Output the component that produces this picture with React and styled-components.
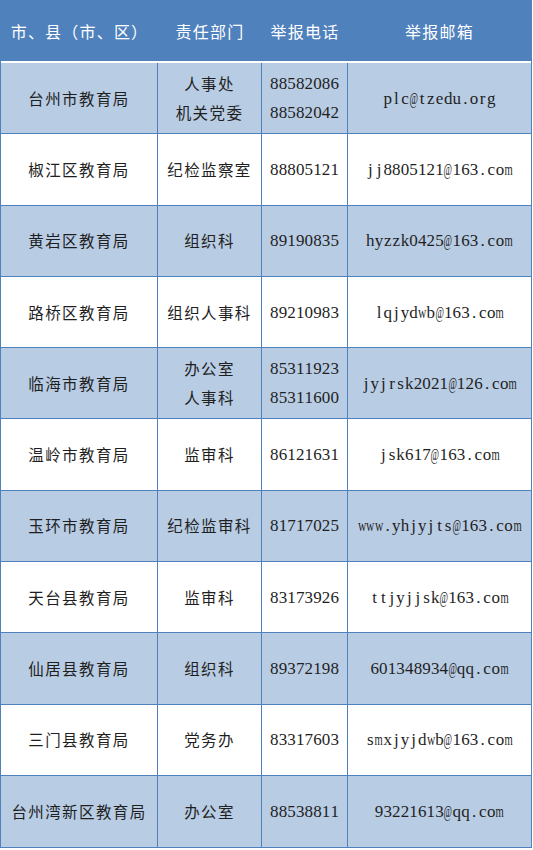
import styled, { createGlobalStyle } from "styled-components";

const rows = [
  { area: "台州市教育局", dept: ["人事处", "机关党委"], phone: ["88582086", "88582042"], mail: "plc@tzedu.org" },
  { area: "椒江区教育局", dept: ["纪检监察室"], phone: ["88805121"], mail: "jj8805121@163.com" },
  { area: "黄岩区教育局", dept: ["组织科"], phone: ["89190835"], mail: "hyzzk0425@163.com" },
  { area: "路桥区教育局", dept: ["组织人事科"], phone: ["89210983"], mail: "lqjydwb@163.com" },
  { area: "临海市教育局", dept: ["办公室", "人事科"], phone: ["85311923", "85311600"], mail: "jyjrsk2021@126.com" },
  { area: "温岭市教育局", dept: ["监审科"], phone: ["86121631"], mail: "jsk617@163.com" },
  { area: "玉环市教育局", dept: ["纪检监审科"], phone: ["81717025"], mail: "www.yhjyjts@163.com" },
  { area: "天台县教育局", dept: ["监审科"], phone: ["83173926"], mail: "ttjyjjsk@163.com" },
  { area: "仙居县教育局", dept: ["组织科"], phone: ["89372198"], mail: "601348934@qq.com" },
  { area: "三门县教育局", dept: ["党务办"], phone: ["83317603"], mail: "smxjyjdwb@163.com" },
  { area: "台州湾新区教育局", dept: ["办公室"], phone: ["88538811"], mail: "93221613@qq.com" },
];

// Times glyphs wider than a half-width cell get squeezed
const squeeze = { "@": 0.54, m: 0.62, w: 0.68, M: 0.58, W: 0.56 };

const GlobalStyle = createGlobalStyle`
  body {
    margin: 0;
    background: #ffffff;
  }
`;

const Table = styled.div`
  width: 532px;
  border-left: 1.5px solid #4f81bd;
  border-right: 1.5px solid #4f81bd;
  border-bottom: 1.5px solid #4f81bd;
  box-sizing: border-box;
`;

const Grid = styled.div`
  display: grid;
  grid-template-columns: 157px 104px 86px 1fr;
`;

const Header = styled(Grid)`
  height: 61px;
  background: #4f81bd;
  border-bottom: 2px solid #ffffff;
`;

const HeadCell = styled.div`
  display: flex;
  align-items: center;
  justify-content: center;
  color: #ffffff;
  font-family: "Noto Sans CJK SC", "Noto Sans", sans-serif;
  font-size: 16px;
  letter-spacing: 1.2px;
  padding-top: 1px;
`;

const Row = styled(Grid)`
  height: 71.3px;
  background: ${(p) => (p.$shaded ? "#b8cce4" : "#ffffff")};
  border-bottom: 1px solid #4f81bd;
  box-sizing: border-box;
  &:last-child {
    border-bottom: none;
  }
`;

const Cell = styled.div`
  display: flex;
  flex-direction: column;
  align-items: center;
  justify-content: center;
  border-right: ${(p) => (p.$last ? "none" : "1.5px solid #4f81bd")};
  color: #1f1f1f;
  line-height: 29px;
`;

const Han = styled.div`
  font-family: "Noto Sans CJK SC", sans-serif;
  font-size: 15.5px;
  letter-spacing: 1.4px;
  font-weight: 400;
`;

const Mono = styled.div`
  display: flex;
  font-family: "Liberation Serif", "Times New Roman", serif;
  font-size: 17px;
`;

const Ch = styled.span`
  display: inline-flex;
  justify-content: center;
  width: 8.65px;
  white-space: pre;
`;

const Glyph = styled.span`
  display: inline-block;
  flex-shrink: 0;
  transform: scaleX(${(p) => p.$scale});
`;

function HalfWidth({ text }) {
  return (
    <Mono>
      {text.split("").map((c, i) => (
        <Ch key={i}>
          {squeeze[c] ? <Glyph $scale={squeeze[c]}>{c}</Glyph> : c}
        </Ch>
      ))}
    </Mono>
  );
}

export default function App() {
  return (
    <>
      <GlobalStyle />
      <Table>
        <Header>
          <HeadCell>市、县（市、区）</HeadCell>
          <HeadCell>责任部门</HeadCell>
          <HeadCell>举报电话</HeadCell>
          <HeadCell>举报邮箱</HeadCell>
        </Header>
        {rows.map((r, i) => (
          <Row key={r.area} $shaded={i % 2 === 0}>
            <Cell>
              <Han>{r.area}</Han>
            </Cell>
            <Cell>
              {r.dept.map((d) => (
                <Han key={d}>{d}</Han>
              ))}
            </Cell>
            <Cell>
              {r.phone.map((p) => (
                <HalfWidth key={p} text={p} />
              ))}
            </Cell>
            <Cell $last>
              <HalfWidth text={r.mail} />
            </Cell>
          </Row>
        ))}
      </Table>
    </>
  );
}
